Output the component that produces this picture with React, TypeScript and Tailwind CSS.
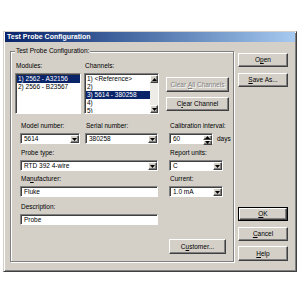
import type { ReactNode } from 'react';

const raised =
  'bg-[#d4d0c8] border border-t-white border-l-white border-r-[#404040] border-b-[#404040] shadow-[inset_-1px_-1px_0_#808080]';
const sunken =
  'bg-white border border-t-[#808080] border-l-[#808080] border-r-white border-b-white shadow-[inset_1px_1px_0_#404040]';

const DownArrow = () => (
  <svg width="5" height="3" viewBox="0 0 5 3">
    <path d="M0 0h5L2.5 3z" fill="#000" />
  </svg>
);

const UpArrow = () => (
  <svg width="5" height="3" viewBox="0 0 5 3">
    <path d="M0 3h5L2.5 0z" fill="#000" />
  </svg>
);

const Button = ({
  children,
  className = '',
  disabled = false,
}: {
  children: ReactNode;
  className?: string;
  disabled?: boolean;
}) => (
  <div
    className={`${raised} flex items-center justify-center ${
      disabled ? 'text-[#808080] [text-shadow:1px_1px_0_#fff]' : 'text-black'
    } ${className}`}
  >
    {children}
  </div>
);

const Label = ({ children }: { children: ReactNode }) => (
  <div className="h-[8px] leading-[8px] pl-px whitespace-nowrap">{children}</div>
);

const Combo = ({ value, className = '' }: { value: string; className?: string }) => (
  <div className={`${sunken} mt-[3px] flex h-[11px] pt-px pl-px ${className}`}>
    <div className="flex-1 pl-[2px] leading-[8px] whitespace-nowrap overflow-hidden">{value}</div>
    <div className={`${raised} w-[9px] flex items-center justify-center`}>
      <DownArrow />
    </div>
  </div>
);

const Field = ({ value, className = '' }: { value: string; className?: string }) => (
  <div className={`${sunken} mt-[3px] h-[11px] pl-[3px] pt-px leading-[8px] ${className}`}>{value}</div>
);

const ListItem = ({ text, selected = false }: { text: string; selected?: boolean }) => (
  <div
    className={`h-[8px] leading-[8px] pl-px whitespace-nowrap ${
      selected ? 'bg-[#0a246a] text-white' : ''
    }`}
  >
    {text}
  </div>
);

export default function App() {
  return (
    <div className="w-[300px] h-[300px] bg-white pt-[31px] pl-[3px] font-['Liberation_Sans',Arial,sans-serif] text-[6.5px] text-black">
      <div className="w-[294px] h-[241px] bg-[#d4d0c8] border border-t-[#d4d0c8] border-l-[#d4d0c8] border-r-[#404040] border-b-[#404040] shadow-[inset_1px_1px_0_#fff,inset_-1px_-1px_0_#808080]">
        {/* title bar */}
        <div className="h-[10px] mx-px bg-gradient-to-r from-[#0a246a] to-[#a6caf0] flex items-center pl-[2px]">
          <span className="text-white font-bold text-[7px] leading-[10px]">Test Probe Configuration</span>
        </div>

        <div className="flex items-start pl-[6px]">
          {/* group box */}
          <div className="mt-[9px] w-[224px] h-[211px] border border-[#808080] shadow-[inset_1px_1px_0_#fff,1px_1px_0_#fff]">
            <div className="-mt-[5px] ml-[4px] px-px w-fit h-[8px] leading-[8px] bg-[#d4d0c8]">
              Test Probe Configuration:
            </div>

            {/* lists row */}
            <div className="mt-[7px] pl-[4px] flex items-start">
              <div className="w-[66px]">
                <Label>Modules:</Label>
                <div className={`${sunken} mt-[3px] h-[41px] overflow-hidden pt-px pl-px`}>
                  <ListItem text="1) 2562 - A32156" selected />
                  <ListItem text="2) 2566 - B23567" />
                </div>
              </div>

              <div className="w-[75px] ml-[3px]">
                <Label>Channels:</Label>
                <div className={`${sunken} mt-[3px] h-[41px] overflow-hidden pt-px pl-px flex`}>
                  <div className="flex-1 overflow-hidden">
                    <ListItem text="1) <Reference>" />
                    <ListItem text="2)" />
                    <ListItem text="3) 5614 - 380258" selected />
                    <ListItem text="4)" />
                    <ListItem text="5)" />
                  </div>
                  <div className="w-[8px] flex flex-col bg-[#eeece6]">
                    <div className={`${raised} h-[8px] flex items-center justify-center`}>
                      <UpArrow />
                    </div>
                    <div className="flex-1" />
                    <div className={`${raised} h-[8px] flex items-center justify-center`}>
                      <DownArrow />
                    </div>
                  </div>
                </div>
              </div>

              <div className="ml-[7px] pt-[15px] w-[63px]">
                <Button disabled className="h-[15px]">
                  Clear&nbsp;<span className="underline">A</span>ll Channels
                </Button>
                <Button className="h-[14px] mt-[5px]">
                  C<span className="underline">l</span>ear Channel
                </Button>
              </div>
            </div>

            {/* fields */}
            <div className="mt-[8px] pl-[9px] flex items-start">
              <div className="w-[138px]">
                <div className="flex">
                  <div className="w-[60px]">
                    <Label>Model number:</Label>
                    <Combo value="5614" />
                  </div>
                  <div className="w-[73px] ml-[5px]">
                    <Label>Serial number:</Label>
                    <Combo value="380258" />
                  </div>
                </div>
                <div className="mt-[5px]">
                  <Label>Probe type:</Label>
                  <Combo value="RTD 392 4-wire" />
                </div>
                <div className="mt-[4px]">
                  <Label>
                    Ma<span className="underline">n</span>ufacturer:
                  </Label>
                  <Field value="Fluke" />
                </div>
                <div className="mt-[6px]">
                  <Label>Description:</Label>
                  <Field value="Probe" />
                </div>
              </div>

              <div className="ml-[11px]">
                <Label>Calibration interval:</Label>
                <div className="mt-[3px] flex items-center">
                  <div className={`${sunken} w-[44px] h-[11px] flex pt-px pl-px`}>
                    <div className="flex-1 pl-[2px] leading-[8px]">60</div>
                    <div className="w-[9px] flex flex-col">
                      <div className={`${raised} flex-1 flex items-center justify-center`}>
                        <UpArrow />
                      </div>
                      <div className={`${raised} flex-1 flex items-center justify-center`}>
                        <DownArrow />
                      </div>
                    </div>
                  </div>
                  <span className="ml-[4px]">days</span>
                </div>
                <div className="mt-[5px]">
                  <Label>Report units:</Label>
                  <Combo value="C" className="w-[54px]" />
                </div>
                <div className="mt-[4px]">
                  <Label>Current:</Label>
                  <Combo value="1.0 mA" className="w-[54px]" />
                </div>
                <Button className="mt-[42px] w-[57px] h-[15px]">
                  C<span className="underline">u</span>stomer...
                </Button>
              </div>
            </div>
          </div>

          {/* right button column */}
          <div className="ml-[4px] mt-[11px] w-[50px]">
            <Button className="h-[14px]">
              O<span className="underline">p</span>en
            </Button>
            <Button className="h-[14px] mt-[6px]">
              <span className="underline">S</span>ave As...
            </Button>
            <div className="mt-[120px] border border-black">
              <Button className="h-[12px]">
                <span className="underline">O</span>K
              </Button>
            </div>
            <Button className="h-[14px] mt-[6px]">
              <span className="underline">C</span>ancel
            </Button>
            <Button className="h-[15px] mt-[5px]">
              <span className="underline">H</span>elp
            </Button>
          </div>
        </div>
      </div>
    </div>
  );
}
